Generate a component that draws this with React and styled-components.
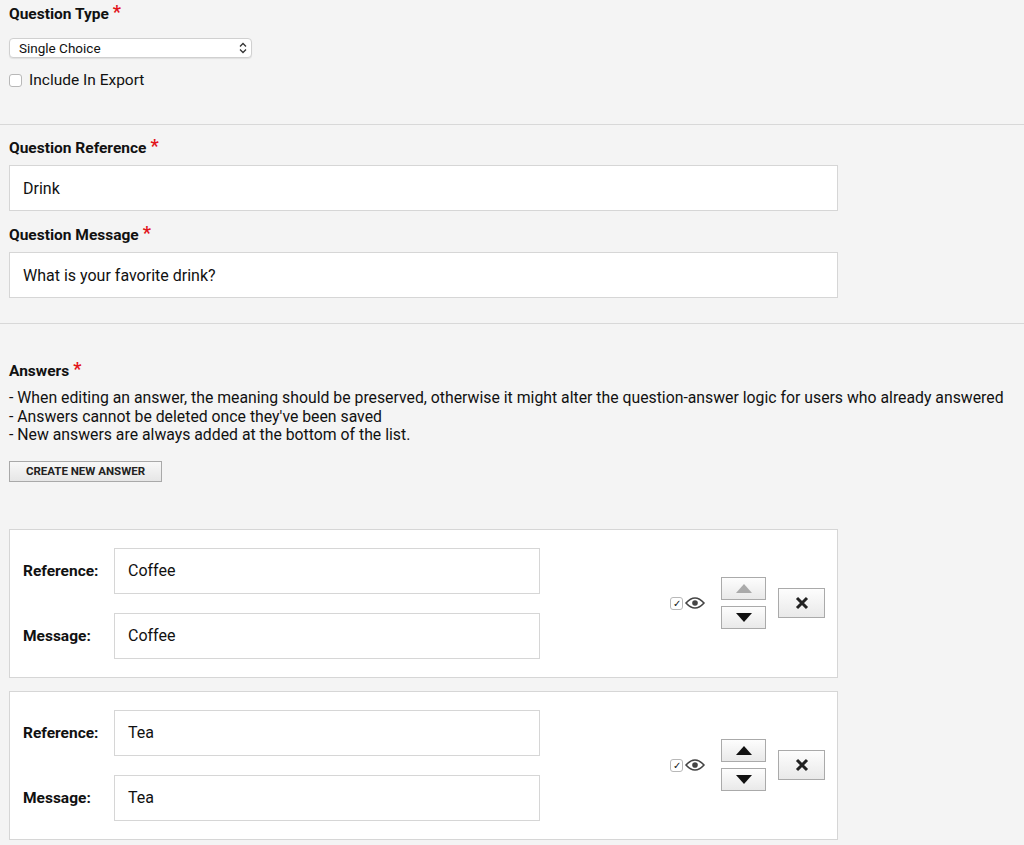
import React from "react";
import styled, { createGlobalStyle } from "styled-components";

const G = createGlobalStyle`
  body { margin:0; background:#f4f4f4; font-family: Roboto, "Liberation Sans", sans-serif; color:#111; }
`;
const Page = styled.div`width:1024px;height:845px;overflow:hidden;`;
const Section = styled.div`padding:${p => p.$pad || "0 9px"};border-bottom:${p => p.$border ? "1px solid #d8d8d8" : "none"};`;
const Label = styled.div`font-weight:bold;font-size:15.5px;height:${p=>p.$h||18}px;display:flex;align-items:flex-start;margin-bottom:${p=>p.$mb||0}px;margin-top:${p=>p.$mt||0}px;`;
const Star = styled.span`color:#e2141b;font-size:18px;margin-left:4px;line-height:14px;`;
const Select = styled.div`width:243px;height:20px;background:#fff;border:1px solid #d0d0d0;border-radius:4px;box-shadow:0 1px 1px rgba(0,0,0,.08);
 display:flex;align-items:center;justify-content:space-between;padding:0 4px 0 9px;box-sizing:border-box;font-size:13.5px;`;
const CheckRow = styled.label`display:flex;align-items:center;gap:7px;font-size:15.5px;margin-top:13px;`;
const Box = styled.span`width:13px;height:13px;border:1px solid #b8b8b8;border-radius:3px;background:#fff;box-sizing:border-box;display:inline-flex;align-items:center;justify-content:center;font-size:10px;`;
const Input = styled.div`width:${p=>p.$w||829}px;height:46px;box-sizing:border-box;background:#fff;border:1px solid #d6d6d6;display:flex;align-items:center;padding-left:13px;font-size:16px;`;
const Notes = styled.div`font-size:15.8px;line-height:18.5px;margin-top:9px;`;
const Btn = styled.button`margin-top:16px;width:153px;height:21px;font-family:inherit;font-size:11.5px;font-weight:bold;color:#222;
 background:linear-gradient(#f8f8f8,#e6e6e6);border:1px solid #a9a9a9;padding:0;`;
const Card = styled.div`width:829px;height:149px;box-sizing:border-box;background:#fff;border:1px solid #d6d6d6;margin-top:${p=>p.$mt}px;
 display:flex;align-items:center;padding-left:13px;`;
const Fields = styled.div`display:grid;grid-template-columns:91px 426px;row-gap:19px;align-items:center;`;
const FLabel = styled.div`font-weight:bold;font-size:15.5px;`;
const Icons = styled.div`display:flex;align-items:center;margin-left:130px;gap:2px;`;
const Arrows = styled.div`display:flex;flex-direction:column;gap:6px;margin-left:16px;`;
const Arr = styled.div`width:45px;height:23px;box-sizing:border-box;border:1px solid #aaa;background:linear-gradient(#fdfdfd,#e9e9e9);display:flex;align-items:center;justify-content:center;`;
const XBtn = styled(Arr)`width:47px;height:30px;margin-left:12px;`;

const Tri = ({ up, dis }) => (
  <svg width="16" height="9" viewBox="0 0 16 9"><path d={up ? "M0 9 L8 0 L16 9Z" : "M0 0 L16 0 L8 9Z"} fill={dis ? "#aaa" : "#111"} /></svg>
);

const Answer = ({ v, mt, upDis }) => (
  <Card $mt={mt}>
    <Fields>
      <FLabel>Reference:</FLabel><Input $w={426}>{v}</Input>
      <FLabel>Message:</FLabel><Input $w={426}>{v}</Input>
    </Fields>
    <Icons>
      <Box>✓</Box>
      <svg width="20" height="14" viewBox="0 0 20 14"><path d="M1 7 Q10 -3 19 7 Q10 17 1 7Z" fill="none" stroke="#444" strokeWidth="1.6"/><circle cx="10" cy="7" r="2.8" fill="#444"/></svg>
    </Icons>
    <Arrows><Arr><Tri up dis={upDis}/></Arr><Arr><Tri/></Arr></Arrows>
    <XBtn><svg width="14" height="14" viewBox="0 0 14 14"><path d="M2 2 L12 12 M12 2 L2 12" stroke="#222" strokeWidth="3"/></svg></XBtn>
  </Card>
);

export default function App() {
  return (
    <Page>
      <G />
      <Section $border $pad="5px 9px 35px">
        <Label $mb={15}>Question Type<Star>*</Star></Label>
        <Select>Single Choice<svg width="8" height="12" viewBox="0 0 8 12"><path d="M1 4.5 L4 1.5 L7 4.5 M1 7.5 L4 10.5 L7 7.5" fill="none" stroke="#333" strokeWidth="1.3"/></svg></Select>
        <CheckRow><Box/>Include In Export</CheckRow>
      </Section>
      <Section $border $pad="14px 9px 25px">
        <Label $mb={8}>Question Reference<Star>*</Star></Label>
        <Input>Drink</Input>
        <Label $mb={8} $mt={15}>Question Message<Star>*</Star></Label>
        <Input>What is your favorite drink?</Input>
      </Section>
      <Section $pad="38px 9px 0">
        <Label>Answers<Star>*</Star></Label>
        <Notes>
          - When editing an answer, the meaning should be preserved, otherwise it might alter the question-answer logic for users who already answered<br/>
          - Answers cannot be deleted once they've been saved<br/>
          - New answers are always added at the bottom of the list.
        </Notes>
        <Btn>CREATE NEW ANSWER</Btn>
        <Answer v="Coffee" mt={47} upDis />
        <Answer v="Tea" mt={13} />
      </Section>
    </Page>
  );
}
